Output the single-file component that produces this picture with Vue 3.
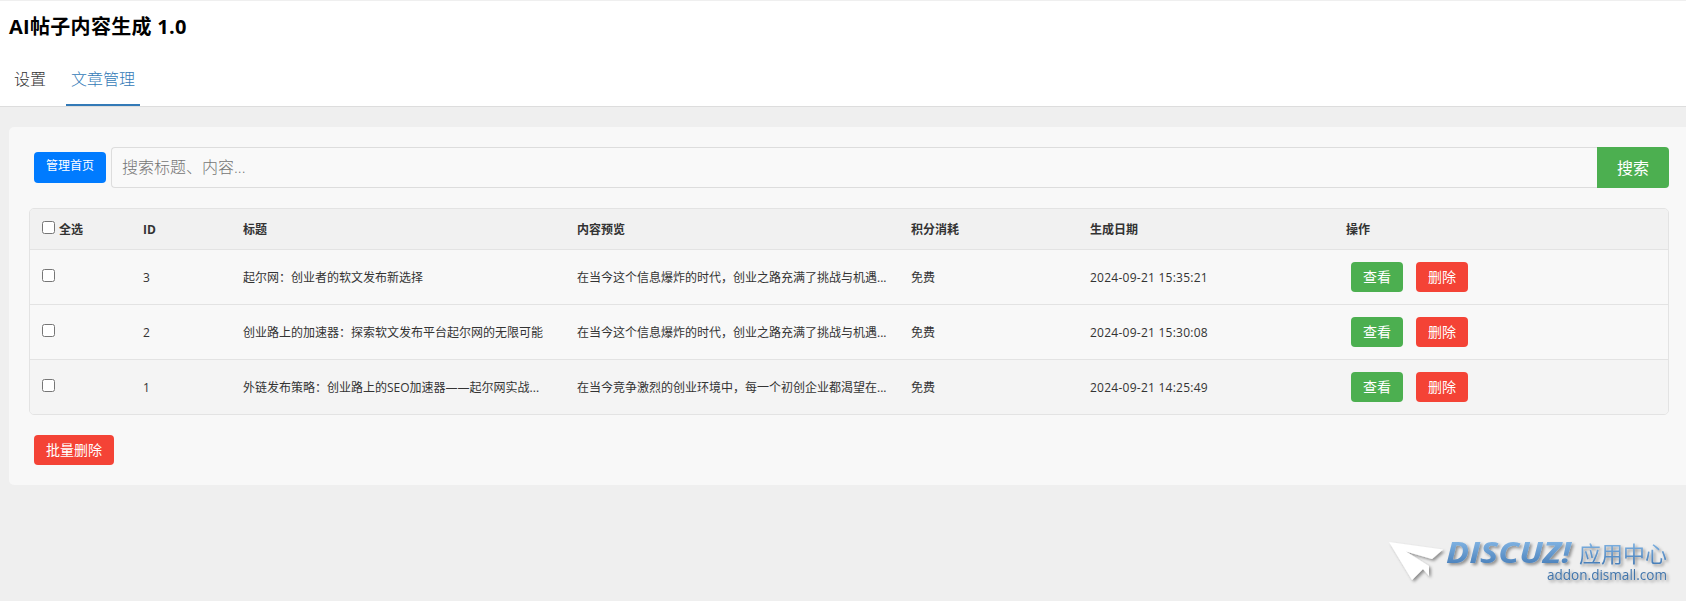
<script setup>
import { ref, computed } from 'vue'

const tabs = ['设置', '文章管理']
const activeTab = ref('文章管理')
const keyword = ref('')
const selected = ref([])

const articles = ref([
    { id: 3, title: '起尔网：创业者的软文发布新选择', preview: '在当今这个信息爆炸的时代，创业之路充满了挑战与机遇...', cost: '免费', date: '2024-09-21 15:35:21' },
    { id: 2, title: '创业路上的加速器：探索软文发布平台起尔网的无限可能', preview: '在当今这个信息爆炸的时代，创业之路充满了挑战与机遇...', cost: '免费', date: '2024-09-21 15:30:08' },
    { id: 1, title: '外链发布策略：创业路上的SEO加速器——起尔网实战...', preview: '在当今竞争激烈的创业环境中，每一个初创企业都渴望在...', cost: '免费', date: '2024-09-21 14:25:49' }
])

// 全选
const allSelected = computed({
    get: () => articles.value.length > 0 && selected.value.length === articles.value.length,
    set: (v) => { selected.value = v ? articles.value.map(a => a.id) : [] }
})

const removeArticle = (id) => {
    articles.value = articles.value.filter(a => a.id !== id)
    selected.value = selected.value.filter(s => s !== id)
}

const removeSelected = () => {
    articles.value = articles.value.filter(a => !selected.value.includes(a.id))
    selected.value = []
}
</script>

<template>
    <div class="page">
        <header class="page-header">
            <h1>AI帖子内容生成 1.0</h1>
            <nav class="tabs">
                <a v-for="t in tabs" :key="t" class="tab" :class="{ active: t === activeTab }" @click="activeTab = t">{{ t }}</a>
            </nav>
        </header>

        <main class="card">
            <form class="search-bar" @submit.prevent>
                <button type="button" class="btn-home">管理首页</button>
                <input v-model="keyword" type="text" class="search-input" placeholder="搜索标题、内容...">
                <button type="submit" class="btn-search">搜索</button>
            </form>

            <div class="table">
                <div class="row head">
                    <label class="check"><input v-model="allSelected" type="checkbox"><span>全选</span></label>
                    <span>ID</span>
                    <span>标题</span>
                    <span>内容预览</span>
                    <span>积分消耗</span>
                    <span>生成日期</span>
                    <span>操作</span>
                </div>
                <div v-for="a in articles" :key="a.id" class="row">
                    <label class="check"><input v-model="selected" type="checkbox" :value="a.id"></label>
                    <span>{{ a.id }}</span>
                    <span>{{ a.title }}</span>
                    <span>{{ a.preview }}</span>
                    <span>{{ a.cost }}</span>
                    <span class="date">{{ a.date }}</span>
                    <div class="actions">
                        <button class="btn btn-view">查看</button>
                        <button class="btn btn-delete" @click="removeArticle(a.id)">删除</button>
                    </div>
                </div>
            </div>

            <button class="btn btn-delete btn-bulk" @click="removeSelected">批量删除</button>
        </main>

        <footer class="brand">
            <svg width="316" height="81" viewBox="0 0 316 81">
                <defs>
                    <linearGradient id="blue" x1="0" y1="0" x2="0" y2="1">
                        <stop offset="0.25" stop-color="#7db0e0" />
                        <stop offset="0.85" stop-color="#4a80ba" />
                    </linearGradient>
                    <filter id="shadow" x="-10%" y="-20%" width="125%" height="160%">
                        <feDropShadow dx="2" dy="2" stdDeviation="1.5" flood-color="#000" flood-opacity="0.4" />
                    </filter>
                </defs>
                <g filter="url(#shadow)">
                    <path d="M19 22L73 29.5L62 39L36 31.5L59 46V56L53 49L42 60Z" fill="#fff" />
                    <text class="brand-name" x="76" y="43" textLength="125" lengthAdjust="spacingAndGlyphs" fill="url(#blue)">DISCUZ!</text>
                    <text class="brand-cn" x="209" y="41.5" textLength="88" fill="url(#blue)">应用中心</text>
                    <text class="brand-url" x="177" y="60" textLength="120" lengthAdjust="spacingAndGlyphs">addon.dismall.com</text>
                </g>
            </svg>
        </footer>
    </div>
</template>

<style>
body {
    background: #efefef;
    overflow: hidden;
}
</style>

<style scoped>
.page {
    font-family: "Open Sans", "Noto Sans CJK SC", sans-serif;
    font-size: 12px;
    color: #333;
}

.page * {
    box-sizing: border-box;
}

button,
input {
    font-family: inherit;
}

.page-header {
    height: 107px;
    background: #fff;
    border-top: 1px solid #efefef;
    border-bottom: 1px solid #ddd;
}

h1 {
    margin: 0;
    padding: 11px 9px 0;
    font-size: 20px;
    line-height: 29px;
    font-weight: 700;
    letter-spacing: 0.3px;
    color: #000;
}

.tabs {
    display: flex;
    gap: 10px;
    padding: 13px 9px 0;
}

.tab {
    height: 52px;
    padding: 0 5px;
    font-size: 16px;
    font-weight: 300;
    line-height: 50px;
    cursor: pointer;
}

.tab:first-child {
    margin-right: 5px;
}

.tab.active {
    color: #337ab7;
    border-bottom: 2px solid #337ab7;
}

.card {
    height: 358px;
    margin: 20px 0 0 9px;
    padding: 20px 17px 20px 20px;
    background: #f8f8f8;
    border-radius: 5px 0 0 5px;
}

.search-bar {
    display: flex;
    align-items: center;
    height: 41px;
    padding-left: 5px;
}

.btn-home {
    width: 72px;
    height: 31px;
    margin-right: 5px;
    padding: 0 0 5px;
    border: none;
    border-radius: 4px;
    background: #007bff;
    color: #fff;
    font-size: 12px;
}

.search-input {
    flex: 1;
    height: 41px;
    padding: 0 10px 1px;
    border: 1px solid #ddd;
    border-right: none;
    border-radius: 4px 0 0 4px;
    background: #f9f9f9;
    font-size: 16px;
    font-weight: 300;
    outline: none;
}

.search-input::placeholder {
    color: #757575;
}

.btn-search {
    width: 72px;
    height: 41px;
    padding: 0 0 2px;
    border: none;
    border-radius: 0 4px 4px 0;
    background: #4caf50;
    color: #fff;
    font-size: 16px;
}

.table {
    margin-top: 20px;
    border: 1px solid #e3e3e3;
    border-radius: 5px;
    overflow: hidden;
}

.row {
    display: grid;
    grid-template-columns: 101px 100px 334px 334px 179px 256px 1fr;
    align-items: center;
    height: 55px;
    border-bottom: 1px solid #e3e3e3;
}

.row > * {
    padding-left: 12px;
    white-space: nowrap;
}

.row:last-child {
    height: 54px;
    border-bottom: none;
    background: #f4f4f4;
}

.row.head {
    height: 41px;
    background: #f1f1f1;
    font-weight: 700;
}

.check {
    display: flex;
    align-items: center;
    gap: 4px;
}

.check input {
    width: 13px;
    height: 13px;
    margin: 0 0 4px;
}

.date {
    letter-spacing: 0.25px;
}

.actions {
    display: flex;
    gap: 13px;
}

.row > .actions {
    padding-left: 17px;
}

.btn {
    height: 30px;
    padding: 0 12px;
    border: none;
    border-radius: 4px;
    color: #fff;
    font-size: 14px;
    line-height: 28px;
    cursor: pointer;
}

.btn-view {
    background: #4caf50;
}

.btn-delete {
    background: #f44336;
}

.btn-bulk {
    width: 80px;
    margin: 20px 0 0 5px;
}

.brand {
    display: flex;
    justify-content: flex-end;
    padding-top: 35px;
}

.brand-name {
    font-family: "Open Sans", sans-serif;
    font-size: 28px;
    font-weight: 700;
    font-style: italic;
}

.brand-cn {
    font-family: "Noto Sans CJK SC", sans-serif;
    font-size: 22px;
}

.brand-url {
    font-family: "Open Sans", sans-serif;
    font-size: 14.5px;
    fill: #4275ab;
}
</style>
